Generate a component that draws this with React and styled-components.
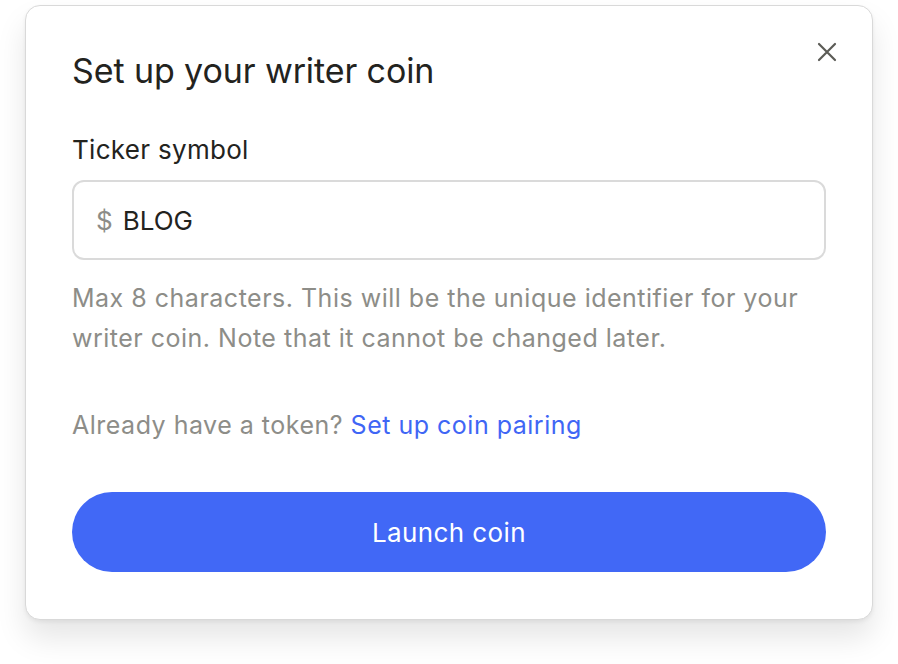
import React, { useState } from 'react';
import styled, { createGlobalStyle } from 'styled-components';

const GlobalStyle = createGlobalStyle`
  html, body {
    margin: 0;
    padding: 0;
    background: #ffffff;
  }
  body {
    font-family: Inter, "Open Sans", "Liberation Sans", sans-serif;
    -webkit-font-smoothing: antialiased;
  }
`;

const Page = styled.div`
  width: 898px;
  height: 664px;
  padding: 5px 0 0 25px;
  box-sizing: border-box;
`;

const Dialog = styled.div`
  position: relative;
  width: 848px;
  box-sizing: border-box;
  padding: 45px 46px 47px 46px;
  background: #ffffff;
  border: 1px solid #d9d9d9;
  border-radius: 15px;
  box-shadow: 0 18px 30px rgba(0, 0, 0, 0.1), 0 2px 4px rgba(0, 0, 0, 0.06);
`;

const Title = styled.h2`
  margin: 0 0 43px;
  font-size: 34px;
  line-height: 40px;
  font-weight: 400;
  letter-spacing: -0.1px;
  color: #23231e;
`;

const CloseButton = styled.button`
  position: absolute;
  top: 32px;
  right: 31px;
  width: 28px;
  height: 28px;
  padding: 0;
  border: 0;
  background: none;
  display: flex;
  align-items: center;
  justify-content: center;
  cursor: pointer;
  color: #5b5b56;
`;

const Label = styled.label`
  display: block;
  font-size: 26px;
  line-height: 32px;
  letter-spacing: 0.3px;
  color: #23231e;
  margin-bottom: 14px;
`;

const InputBox = styled.div`
  display: flex;
  align-items: center;
  gap: 10px;
  height: 80px;
  box-sizing: border-box;
  padding: 0 22px;
  border: 2px solid #dadada;
  border-radius: 12px;
`;

const Prefix = styled.span`
  font-size: 26px;
  color: #8d8d88;
`;

const Input = styled.input`
  flex: 1;
  border: 0;
  outline: none;
  padding: 0;
  font-family: inherit;
  font-size: 26px;
  letter-spacing: 0;
  color: #23231e;
  background: transparent;
`;

const Muted = styled.p`
  margin: ${({ $gap }) => $gap}px 0 0;
  font-size: 25px;
  line-height: 40px;
  letter-spacing: 0.5px;
  color: #8d8d88;
`;

const Link = styled.a`
  color: #3f66f5;
  text-decoration: none;
  cursor: pointer;
`;

const LaunchButton = styled.button`
  display: block;
  width: 100%;
  height: 80px;
  margin-top: 47px;
  border: 0;
  border-radius: 40px;
  background: #4168f6;
  color: #ffffff;
  font-family: inherit;
  font-size: 26px;
  letter-spacing: 0.4px;
  cursor: pointer;
`;

const App = () => {
  const [ticker, setTicker] = useState('BLOG');

  return (
    <>
      <GlobalStyle />
      <Page>
        <Dialog>
          <CloseButton aria-label="Close">
            <svg width="20" height="20" viewBox="0 0 20 20" fill="none">
              <path d="M2 2L18 18M18 2L2 18" stroke="currentColor" strokeWidth="2.2" strokeLinecap="round" />
            </svg>
          </CloseButton>
          <Title>Set up your writer coin</Title>
          <Label>Ticker symbol</Label>
          <InputBox>
            <Prefix>$</Prefix>
            <Input
              value={ticker}
              maxLength={8}
              onChange={(e) => setTicker(e.target.value.toUpperCase())}
            />
          </InputBox>
          <Muted $gap={18}>
            Max 8 characters. This will be the unique identifier for your writer coin. Note that it
            cannot be changed later.
          </Muted>
          <Muted $gap={47}>
            Already have a token? <Link>Set up coin pairing</Link>
          </Muted>
          <LaunchButton>Launch coin</LaunchButton>
        </Dialog>
      </Page>
    </>
  );
};

export default App;
